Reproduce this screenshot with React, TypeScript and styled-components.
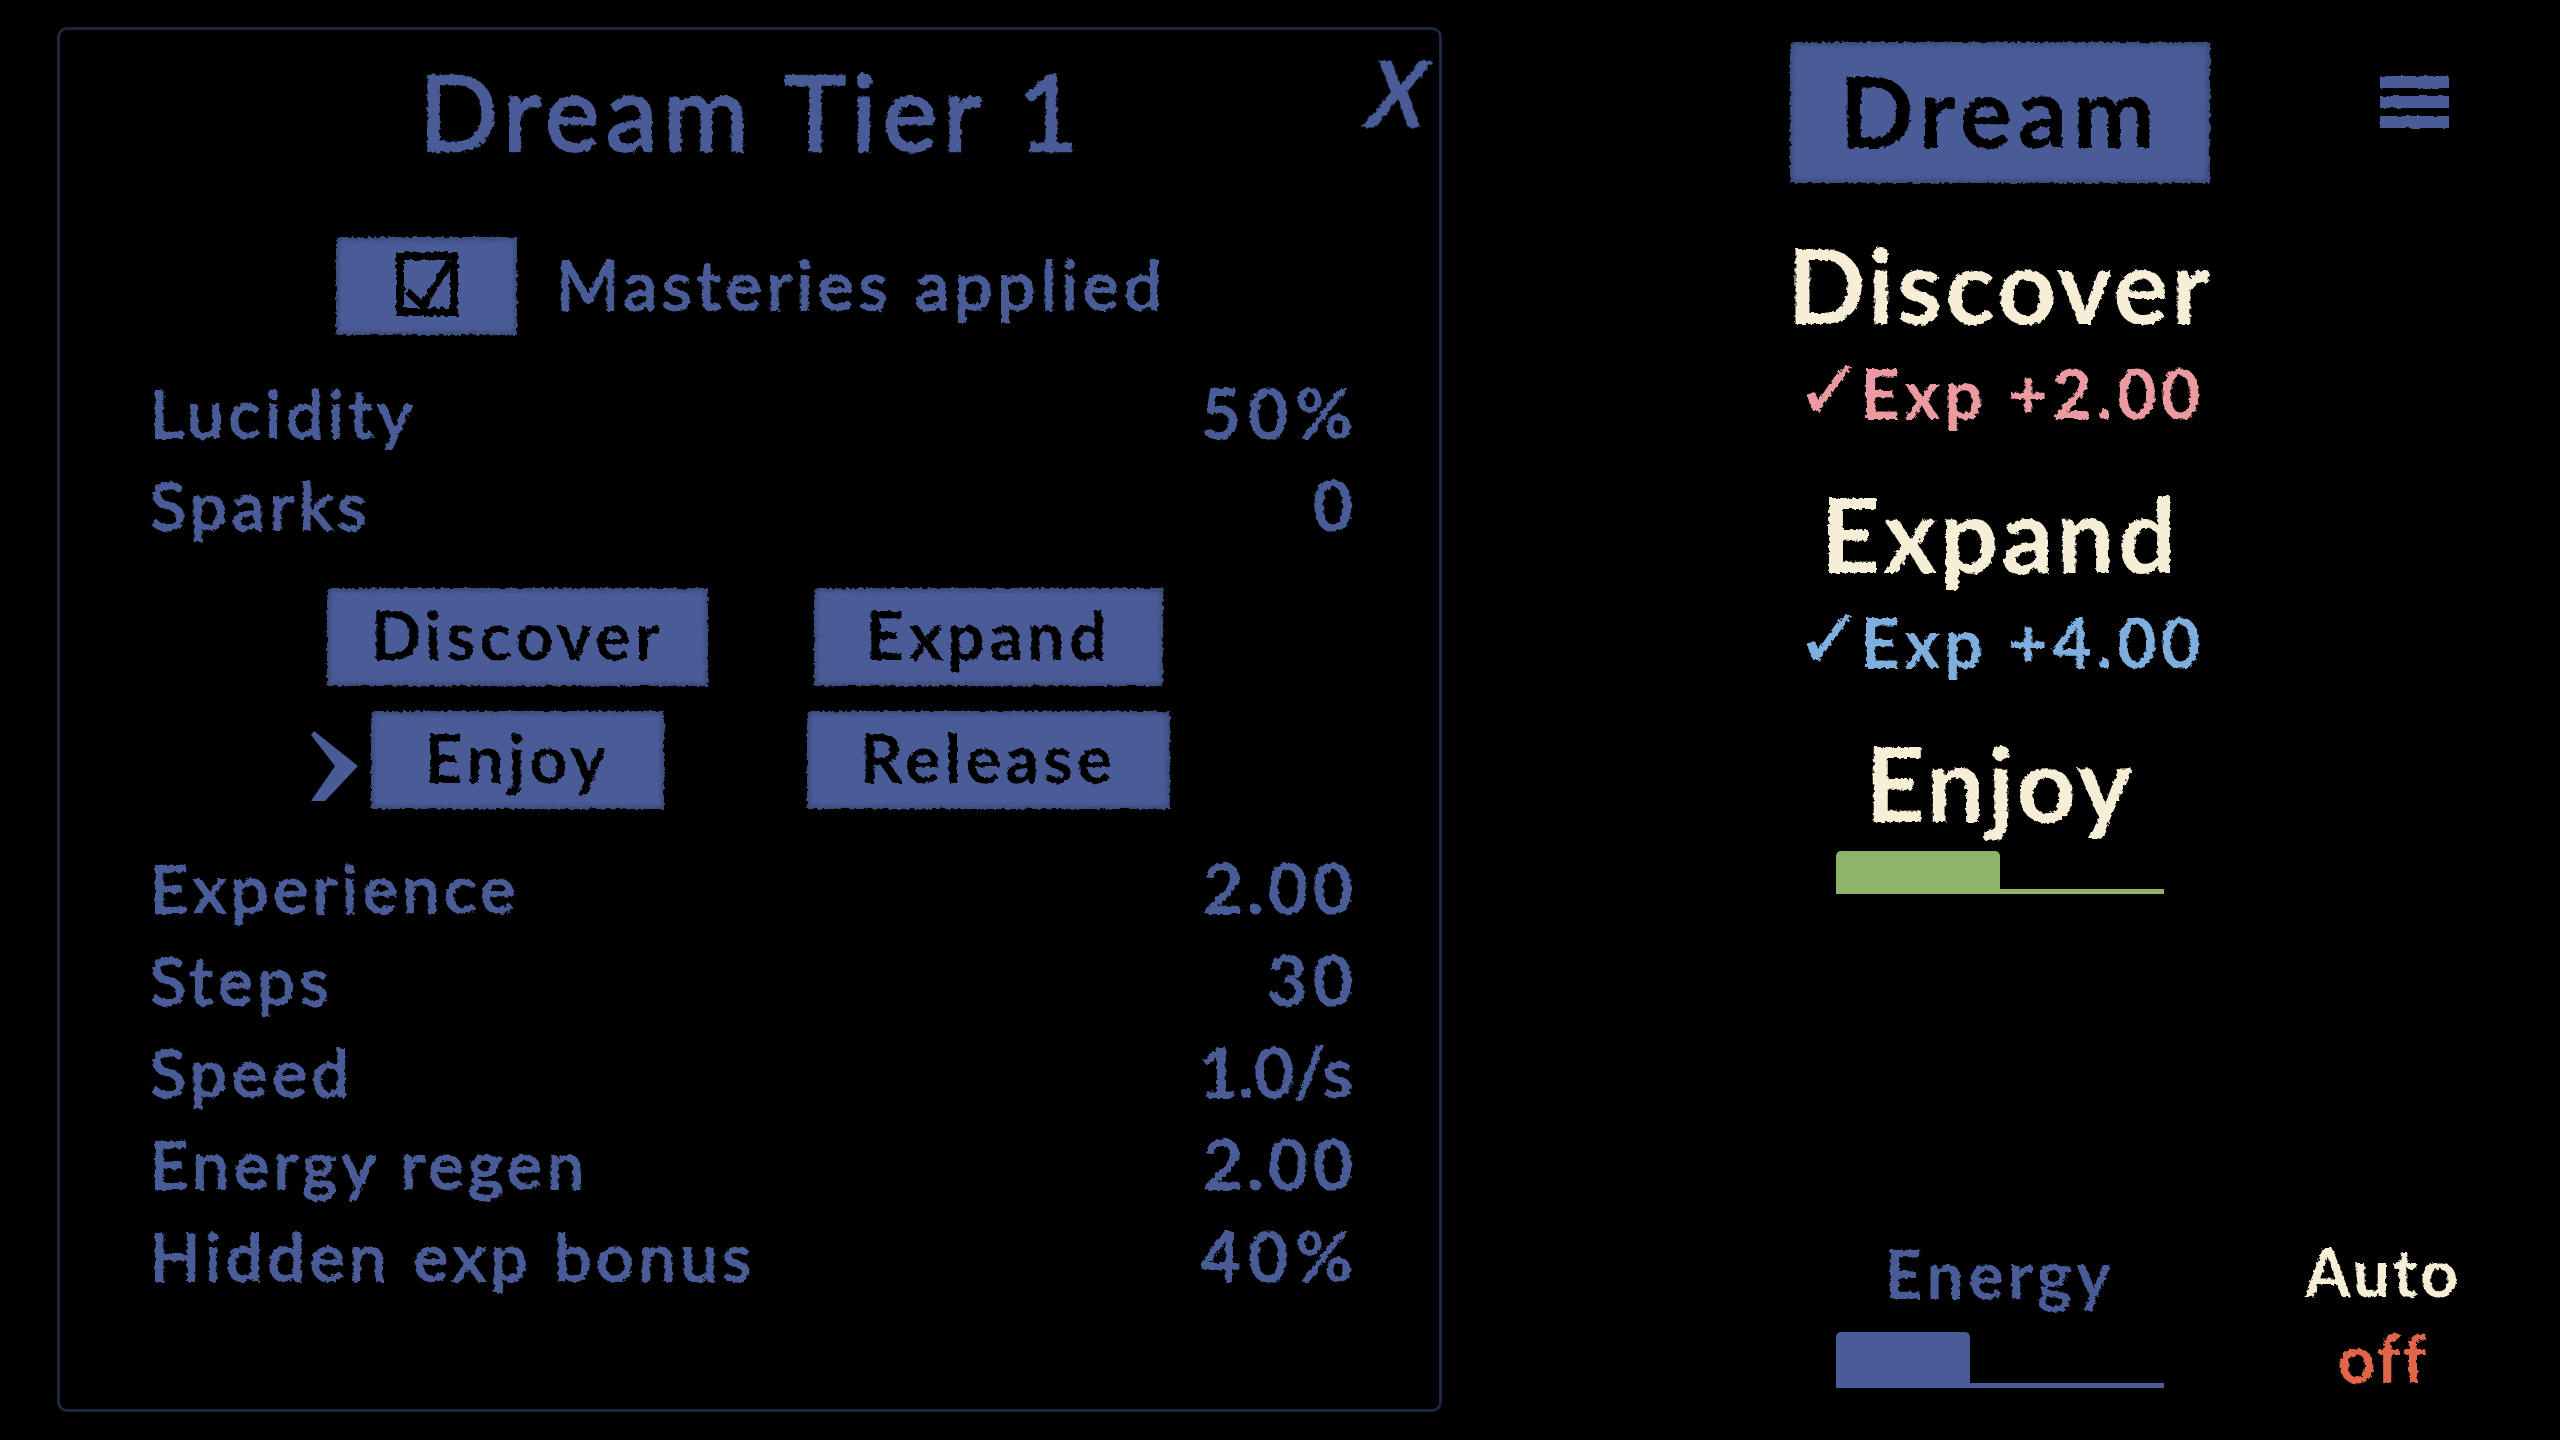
import React from 'react';
import styled, { createGlobalStyle } from 'styled-components';

const BLUE = '#4a5c98';
const CREAM = '#f6eed6';

const GlobalStyle = createGlobalStyle`
  html, body {
    margin: 0;
    background: #000;
  }
  body {
    font-family: "Lato", "Open Sans", sans-serif;
    color: ${BLUE};
  }
`;

const Page = styled.div`
  display: flex;
  width: 2560px;
  height: 1440px;
  overflow: hidden;
  background: #000;
`;

const Panel = styled.section`
  box-sizing: border-box;
  display: flex;
  flex-direction: column;
  width: 1385px;
  height: 1385px;
  margin: 27px 0 0 57px;
  padding: 0 86px 0 90px;
  border: 3px solid #1d2740;
  border-radius: 10px;
  position: relative;
`;

const Title = styled.h1`
  margin: 0;
  height: 168px;
  line-height: 162px;
  text-align: center;
  font-size: 104px;
  font-weight: 400;
  letter-spacing: 6px;
  -webkit-text-stroke: 2.5px ${BLUE};
  filter: url(#rough);
`;

const CloseButton = styled.span`
  position: absolute;
  top: 8px;
  right: 12px;
  font-size: 92px;
  line-height: 110px;
  font-weight: 700;
  font-style: italic;
  transform: skewX(-6deg);
  filter: url(#rough);
`;

const MasteryRow = styled.div`
  display: flex;
  justify-content: center;
  align-items: center;
  gap: 39px;
  margin-top: 39px;
  margin-bottom: 34px;
`;

const MasteryLabel = styled.span`
  padding-bottom: 6px;
  font-size: 68px;
  letter-spacing: 5px;
  -webkit-text-stroke: 2px ${BLUE};
  filter: url(#rough);
`;

const BlockButton = styled.button<{ $width: number; $height: number; $size: number; $tracking: number }>`
  box-sizing: border-box;
  display: flex;
  align-items: center;
  justify-content: center;
  width: ${(p) => p.$width}px;
  height: ${(p) => p.$height}px;
  padding: 0 0 5px;
  border: none;
  background: ${BLUE};
  box-shadow: inset 0 0 4px 3px #3a4977;
  color: #000;
  font-family: inherit;
  font-size: ${(p) => p.$size}px;
  font-weight: 700;
  letter-spacing: ${(p) => p.$tracking}px;
  filter: url(#rough);
`;

const StatRow = styled.div`
  box-sizing: border-box;
  display: flex;
  justify-content: space-between;
  align-items: center;
  height: 92px;
  padding-bottom: 6px;
  font-size: 66px;
  letter-spacing: 5px;
  -webkit-text-stroke: 2px ${BLUE};
  filter: url(#rough);
`;

const StatValue = styled.span<{ $tracking: number }>`
  margin-right: ${(p) => -p.$tracking}px;
  font-size: 70px;
  font-weight: 700;
  letter-spacing: ${(p) => p.$tracking}px;
  -webkit-text-stroke: 0;
`;

const ActionGrid = styled.div`
  display: grid;
  grid-template-columns: 471px 471px;
  justify-content: center;
  justify-items: center;
  row-gap: 25px;
  margin: 35px 0;
  padding-left: 3px;
`;

const ActionSlot = styled.div`
  position: relative;
`;

const ActiveMarker = styled.svg`
  position: absolute;
  left: -60px;
  top: 20px;
  width: 47px;
  height: 70px;
`;

const RightPane = styled.div`
  box-sizing: border-box;
  display: flex;
  flex-direction: column;
  height: 1440px;
  margin-left: 348px;
  padding: 42px 0 52px;
`;

const TopRow = styled.div`
  display: flex;
  align-items: flex-start;
`;

const MenuIcon = styled.div`
  display: flex;
  flex-direction: column;
  gap: 8px;
  width: 69px;
  margin: 34px 0 0 170px;
  filter: url(#rough-small);
`;

const MenuBar = styled.span`
  display: block;
  height: 12px;
  background: ${BLUE};
`;

const ActivityList = styled.div`
  display: flex;
  flex-direction: column;
  align-items: center;
  width: 420px;
  margin-top: 36px;
`;

const ActivityName = styled.div`
  height: 134px;
  line-height: 130px;
  font-size: 103px;
  color: ${CREAM};
  font-weight: 700;
  letter-spacing: 3px;
  filter: url(#rough);
`;

const ActivityGain = styled.div<{ $color: string }>`
  display: flex;
  align-items: baseline;
  height: 115px;
  line-height: 80px;
  font-size: 68px;
  color: ${(p) => p.$color};
  font-weight: 700;
  letter-spacing: 4.5px;
  white-space: nowrap;
  filter: url(#rough);
`;

const GainCheck = styled.span`
  margin-right: -5px;
  font-family: "DejaVu Sans", sans-serif;
  font-size: 84px;
  line-height: 0;
  font-weight: 400;
  letter-spacing: 0;
`;

const BarTrack = styled.div<{ $color: string; $height: number }>`
  box-sizing: border-box;
  display: flex;
  width: 328px;
  height: ${(p) => p.$height}px;
  border-bottom: 5px solid ${(p) => p.$color};
`;

const BarFill = styled.div<{ $color: string }>`
  height: calc(100% + 5px);
  border-radius: 5px 5px 0 5px;
  background: ${(p) => p.$color};
`;

const BottomRow = styled.div`
  display: flex;
  align-items: flex-end;
  margin-top: auto;
`;

const EnergyMeter = styled.div`
  display: flex;
  flex-direction: column;
  align-items: center;
  width: 420px;
`;

const BottomLabel = styled.div`
  height: 86px;
  line-height: 56px;
  font-size: 66px;
  letter-spacing: 4.5px;
  font-weight: 700;
  filter: url(#rough);
`;

const AutoToggle = styled.div`
  display: flex;
  flex-direction: column;
  align-items: center;
  width: 170px;
  margin-left: 88px;
`;

const AutoLabel = styled(BottomLabel)`
  line-height: 60px;
  color: ${CREAM};
  letter-spacing: 3px;
`;

const AutoState = styled.div`
  font-size: 66px;
  line-height: 60px;
  font-weight: 700;
  letter-spacing: 2px;
  color: #e0654a;
  filter: url(#rough);
`;

const HiddenDefs = styled.svg`
  position: absolute;
  width: 0;
  height: 0;
`;

type Stat = { label: string; value: string; tracking: number };

const STATS_TOP: Stat[] = [
  { label: 'Lucidity', value: '50%', tracking: 7 },
  { label: 'Sparks', value: '0', tracking: 0 },
];

const STATS_BOTTOM: Stat[] = [
  { label: 'Experience', value: '2.00', tracking: 4 },
  { label: 'Steps', value: '30', tracking: 5 },
  { label: 'Speed', value: '1.0/s', tracking: -1 },
  { label: 'Energy regen', value: '2.00', tracking: 4 },
  { label: 'Hidden exp bonus', value: '40%', tracking: 7 },
];

const CheckIcon = () => (
  <svg width="62" height="64" viewBox="0 0 62 64">
    <rect x="4" y="4" width="54" height="56" fill="none" stroke="#000" strokeWidth="8" />
    <path d="M11 39 L27 54 L54 9" fill="none" stroke="#000" strokeWidth="7" />
  </svg>
);

const App = () => {
  const renderStat = ({ label, value, tracking }: Stat) => (
    <StatRow key={label}>
      <span>{label}</span>
      <StatValue $tracking={tracking}>{value}</StatValue>
    </StatRow>
  );

  return (
    <Page>
      <GlobalStyle />
      <HiddenDefs aria-hidden="true">
        <filter id="rough" x="-5%" y="-5%" width="110%" height="110%">
          <feTurbulence type="fractalNoise" baseFrequency="0.22" numOctaves="2" seed="4" />
          <feDisplacementMap in="SourceGraphic" scale="5" />
        </filter>
        <filter id="rough-small">
          <feTurbulence type="fractalNoise" baseFrequency="0.12" numOctaves="2" seed="9" />
          <feDisplacementMap in="SourceGraphic" scale="3" />
        </filter>
      </HiddenDefs>

      <Panel>
        <Title>Dream Tier 1</Title>
        <CloseButton>X</CloseButton>
        <MasteryRow>
          <BlockButton $width={181} $height={98} $size={60} $tracking={0}>
            <CheckIcon />
          </BlockButton>
          <MasteryLabel>Masteries applied</MasteryLabel>
        </MasteryRow>
        {STATS_TOP.map(renderStat)}
        <ActionGrid>
          <BlockButton $width={381} $height={98} $size={66} $tracking={4.5}>Discover</BlockButton>
          <BlockButton $width={349} $height={98} $size={66} $tracking={4.5}>Expand</BlockButton>
          <ActionSlot>
            <ActiveMarker viewBox="0 0 47 70">
              <path d="M3 0 L47 35 L14 70 L0 70 L24 35 L0 4 Z" fill={BLUE} />
            </ActiveMarker>
            <BlockButton $width={293} $height={98} $size={66} $tracking={4.5}>Enjoy</BlockButton>
          </ActionSlot>
          <BlockButton $width={363} $height={98} $size={66} $tracking={4.5}>Release</BlockButton>
        </ActionGrid>
        {STATS_BOTTOM.map(renderStat)}
      </Panel>

      <RightPane>
        <TopRow>
          <BlockButton $width={420} $height={141} $size={98} $tracking={5.5}>Dream</BlockButton>
          <MenuIcon>
            <MenuBar />
            <MenuBar />
            <MenuBar />
          </MenuIcon>
        </TopRow>
        <ActivityList>
          <ActivityName>Discover</ActivityName>
          <ActivityGain $color="#eb9aa2"><GainCheck>✓</GainCheck>Exp +2.00</ActivityGain>
          <ActivityName>Expand</ActivityName>
          <ActivityGain $color="#7fafdf"><GainCheck>✓</GainCheck>Exp +4.00</ActivityGain>
          <ActivityName>Enjoy</ActivityName>
          <BarTrack $color="#8db368" $height={43}>
            <BarFill $color="#8db368" style={{ width: '50%' }} />
          </BarTrack>
        </ActivityList>
        <BottomRow>
          <EnergyMeter>
            <BottomLabel>Energy</BottomLabel>
            <BarTrack $color={BLUE} $height={56}>
              <BarFill $color={BLUE} style={{ width: '41%' }} />
            </BarTrack>
          </EnergyMeter>
          <AutoToggle>
            <AutoLabel>Auto</AutoLabel>
            <AutoState>off</AutoState>
          </AutoToggle>
        </BottomRow>
      </RightPane>
    </Page>
  );
};

export default App;
